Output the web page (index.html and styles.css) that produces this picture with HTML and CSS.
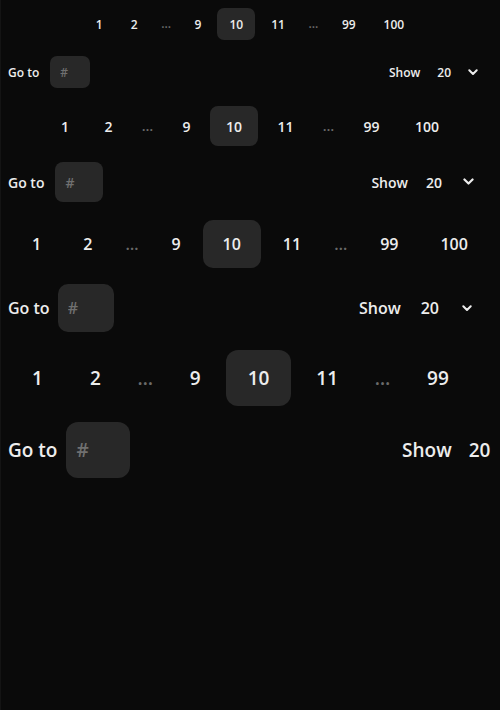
FILE: index.html
```html
<!DOCTYPE html>
<html lang="en">
<head>
<meta charset="utf-8">
<title>Pagination sizes</title>
<link rel="stylesheet" href="styles.css">
</head>
<body>
<main class="demo">
  <section class="pager pager--sm">
    <nav class="pages">
      <button class="page">1</button>
      <button class="page">2</button>
      <span class="ellipsis">…</span>
      <button class="page">9</button>
      <button class="page is-active">10</button>
      <button class="page">11</button>
      <span class="ellipsis">…</span>
      <button class="page">99</button>
      <button class="page">100</button>
    </nav>
    <div class="controls">
      <label class="goto"><span class="label">Go to</span><input class="goto-input" placeholder="#"></label>
      <div class="show"><span class="label">Show</span><button class="select"><span>20</span><svg class="chev" viewBox="0 0 10 7"><path d="M1.3 1.3 L5 5 L8.7 1.3"/></svg></button></div>
    </div>
  </section>

  <section class="pager pager--md">
    <nav class="pages">
      <button class="page">1</button>
      <button class="page">2</button>
      <span class="ellipsis">…</span>
      <button class="page">9</button>
      <button class="page is-active">10</button>
      <button class="page">11</button>
      <span class="ellipsis">…</span>
      <button class="page">99</button>
      <button class="page">100</button>
    </nav>
    <div class="controls">
      <label class="goto"><span class="label">Go to</span><input class="goto-input" placeholder="#"></label>
      <div class="show"><span class="label">Show</span><button class="select"><span>20</span><svg class="chev" viewBox="0 0 10 7"><path d="M1.3 1.3 L5 5 L8.7 1.3"/></svg></button></div>
    </div>
  </section>

  <section class="pager pager--lg">
    <nav class="pages">
      <button class="page">1</button>
      <button class="page">2</button>
      <span class="ellipsis">…</span>
      <button class="page">9</button>
      <button class="page is-active">10</button>
      <button class="page">11</button>
      <span class="ellipsis">…</span>
      <button class="page">99</button>
      <button class="page">100</button>
    </nav>
    <div class="controls">
      <label class="goto"><span class="label">Go to</span><input class="goto-input" placeholder="#"></label>
      <div class="show"><span class="label">Show</span><button class="select"><span>20</span><svg class="chev" viewBox="0 0 10 7"><path d="M1.3 1.3 L5 5 L8.7 1.3"/></svg></button></div>
    </div>
  </section>

  <section class="pager pager--xl">
    <nav class="pages">
      <button class="page">1</button>
      <button class="page">2</button>
      <span class="ellipsis">…</span>
      <button class="page">9</button>
      <button class="page is-active">10</button>
      <button class="page">11</button>
      <span class="ellipsis">…</span>
      <button class="page">99</button>
      <button class="page">100</button>
    </nav>
    <div class="controls">
      <label class="goto"><span class="label">Go to</span><input class="goto-input" placeholder="#"></label>
      <div class="show"><span class="label">Show</span><button class="select"><span>20</span><svg class="chev" viewBox="0 0 10 7"><path d="M1.3 1.3 L5 5 L8.7 1.3"/></svg></button></div>
    </div>
  </section>
</main>
</body>
</html>
```

FILE: styles.css
```css
html {
  background: linear-gradient(to right, #141414 1px, #0a0a0a 1px);
}
body {
  margin: 8px;
  color: #ededed;
  font-family: "Open Sans", "Noto Sans", sans-serif;
  font-weight: 600;
}
.demo {
  display: flex;
  flex-direction: column;
  gap: 18px;
}
.pager {
  display: flex;
  flex-direction: column;
  gap: 16px;
  width: max-content;
  min-width: 100%;
  font-size: var(--fs);
}
.pager--sm { --fs: 12px; --h: 32px; --px: 12px; --gap: 4px; --ew: 25px; --r: 7px; --iw: 40px; --lg: 11px; --sg: 17px; --cg: 17px; --ce: 14px; --cw: 10px; --pp: 0px; }
.pager--md { --fs: 14px; --h: 40px; --px: 16px; --gap: 3.5px; --ew: 31px; --r: 8px; --iw: 48px; --lg: 11px; --sg: 18px; --cg: 21px; --ce: 18px; --cw: 11px; --pp: 0px; }
.pager--lg { --fs: 16px; --h: 48px; --px: 20px; --gap: 2px; --ew: 35px; --r: 10px; --iw: 56px; --lg: 8px; --sg: 20px; --cg: 23px; --ce: 20px; --cw: 10px; --pp: 0px; }
.pager--xl { --fs: 19px; --h: 56px; --px: 22px; --gap: 3px; --ew: 39px; --r: 12px; --iw: 64px; --lg: 9px; --sg: 17px; --cg: 26px; --ce: 24px; --cw: 12px; --pp: 2px; }

.pages {
  display: flex;
  justify-content: center;
  align-items: center;
  gap: var(--gap);
  padding: 0 var(--pp);
}
.page {
  height: var(--h);
  padding: 0 var(--px);
  border: 0;
  border-radius: var(--r);
  background: transparent;
  color: #ededed;
  font: inherit;
  cursor: pointer;
}
.page.is-active {
  background: #282828;
}
.ellipsis {
  width: var(--ew);
  text-align: center;
  color: #6a6a6a;
  line-height: var(--h);
}
.controls {
  display: flex;
  justify-content: space-between;
  align-items: center;
}
.goto {
  display: flex;
  align-items: center;
  gap: var(--lg);
}
.goto-input {
  width: var(--iw);
  height: var(--h);
  box-sizing: border-box;
  padding: 0 10px;
  border: 0;
  border-radius: var(--r);
  background: #282828;
  color: #ededed;
  font: inherit;
  outline: none;
}
.goto-input::placeholder {
  color: #707070;
}
.show {
  display: flex;
  align-items: center;
  gap: var(--sg);
}
.select {
  display: flex;
  align-items: center;
  gap: var(--cg);
  height: var(--h);
  padding: 0 var(--ce) 0 0;
  border: 0;
  background: transparent;
  color: #ededed;
  font: inherit;
}
.chev {
  width: var(--cw);
  height: calc(var(--cw) * 0.7);
  fill: none;
  stroke: #ededed;
  stroke-width: 2;
  stroke-linecap: round;
  stroke-linejoin: round;
}
```
